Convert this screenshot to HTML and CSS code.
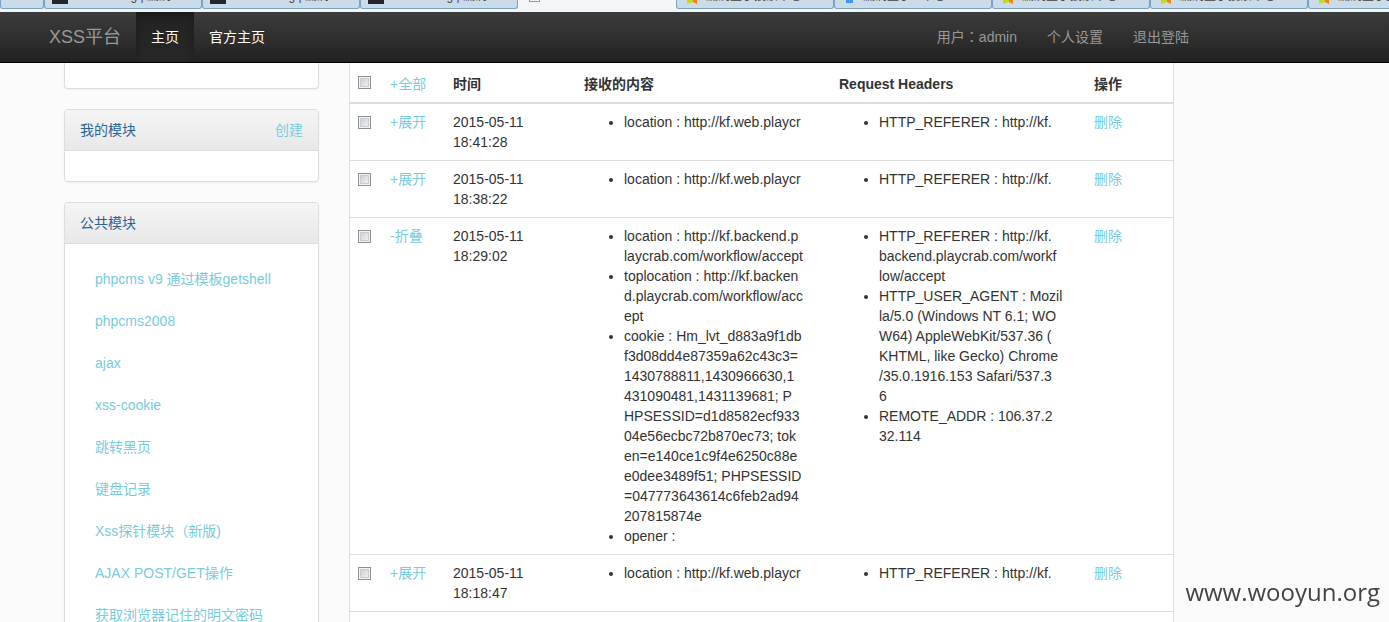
FILE: index.html
```
<!DOCTYPE html>
<html lang="zh-CN">
<head>
<meta charset="utf-8">
<title>XSS平台</title>
<link rel="stylesheet" href="styles.css">
</head>
<body>
<div class="tabs">
  <div class="tab tab-first"></div>
  <div class="tab"><span class="fav fav-dark"></span><span class="tab-text tab-text-end">g | 漏洞</span></div>
  <div class="tab"><span class="fav fav-dark"></span><span class="tab-text tab-text-end">g | 漏洞</span></div>
  <div class="tab"><span class="fav fav-dark"></span><span class="tab-text tab-text-end">g | 漏洞</span></div>
  <div class="tab tab-active"><span class="fav fav-page"></span></div>
  <div class="tab"><span class="fav fav-star"></span><span class="tab-text">漏洞盒子搜索中心</span></div>
  <div class="tab"><span class="fav fav-blue"></span><span class="tab-text">漏洞盒子 - 中心</span></div>
  <div class="tab"><span class="fav fav-star"></span><span class="tab-text">漏洞盒子搜索中心</span></div>
  <div class="tab"><span class="fav fav-star"></span><span class="tab-text">漏洞盒子搜索中心</span></div>
  <div class="tab"><span class="fav fav-star"></span><span class="tab-text">漏洞盒子搜索中心</span></div>
</div>
<header class="navbar">
  <nav class="container nav-inner">
    <a class="brand" href="#">XSS平台</a>
    <a class="nav-link nav-active" href="#">主页</a>
    <a class="nav-link nav-bright" href="#">官方主页</a>
    <span class="nav-space"></span>
    <a class="nav-link" href="#">用户<span class="colon" lang="zh-TW">：</span>admin</a>
    <a class="nav-link" href="#">个人设置</a>
    <a class="nav-link" href="#">退出登陆</a>
  </nav>
</header>
<div class="container content">
  <aside class="sidebar">
    <section class="panel panel-cut"></section>
    <section class="panel">
      <h2 class="panel-head">我的模块 <a href="#">创建</a></h2>
      <div class="panel-body"></div>
    </section>
    <section class="panel">
      <h2 class="panel-head">公共模块</h2>
      <ul class="modules">
        <li><a href="#">phpcms v9 通过模板getshell</a></li>
        <li><a href="#">phpcms2008</a></li>
        <li><a href="#">ajax</a></li>
        <li><a href="#">xss-cookie</a></li>
        <li><a href="#">跳转黑页</a></li>
        <li><a href="#">键盘记录</a></li>
        <li><a href="#">Xss探针模块<span class="colon" lang="zh-TW">（</span>新版)</a></li>
        <li><a href="#">AJAX POST/GET操作</a></li>
        <li><a href="#">获取浏览器记住的明文密码</a></li>
      </ul>
    </section>
  </aside>
  <main class="main">
    <table class="records">
      <colgroup><col class="c-check"><col class="c-toggle"><col class="c-time"><col class="c-data"><col class="c-data"><col></colgroup>
      <thead>
        <tr><th><input type="checkbox" aria-label="全部"></th><th><a class="plain" href="#">+全部</a></th><th>时间</th><th>接收的内容</th><th>Request Headers</th><th>操作</th></tr>
      </thead>
      <tbody>
        <tr>
          <td><input type="checkbox" aria-label="2015-05-11 18:41:28"></td><td><a href="#">+展开</a></td><td>2015-05-11<br>18:41:28</td>
          <td><ul><li>location : http://kf.web.playcr</li></ul></td>
          <td><ul><li>HTTP_REFERER : http://kf.</li></ul></td>
          <td><a href="#">删除</a></td>
        </tr>
        <tr>
          <td><input type="checkbox" aria-label="2015-05-11 18:38:22"></td><td><a href="#">+展开</a></td><td>2015-05-11<br>18:38:22</td>
          <td><ul><li>location : http://kf.web.playcr</li></ul></td>
          <td><ul><li>HTTP_REFERER : http://kf.</li></ul></td>
          <td><a href="#">删除</a></td>
        </tr>
        <tr>
          <td><input type="checkbox" aria-label="2015-05-11 18:29:02"></td><td><a href="#">-折叠</a></td><td>2015-05-11<br>18:29:02</td>
          <td><ul>
            <li>location : http://kf.backend.p<br>laycrab.com/workflow/accept</li>
            <li>toplocation : http://kf.backen<br>d.playcrab.com/workflow/acc<br>ept</li>
            <li>cookie : Hm_lvt_d883a9f1db<br>f3d08dd4e87359a62c43c3=<br>1430788811,1430966630,1<br>431090481,1431139681; P<br>HPSESSID=d1d8582ecf933<br>04e56ecbc72b870ec73; tok<br>en=e140ce1c9f4e6250c88e<br>e0dee3489f51; PHPSESSID<br>=047773643614c6feb2ad94<br>207815874e</li>
            <li>opener :</li>
          </ul></td>
          <td><ul>
            <li>HTTP_REFERER : http://kf.<br>backend.playcrab.com/workf<br>low/accept</li>
            <li>HTTP_USER_AGENT : Mozil<br>la/5.0 (Windows NT 6.1; WO<br>W64) AppleWebKit/537.36 (<br>KHTML, like Gecko) Chrome<br>/35.0.1916.153 Safari/537.3<br>6</li>
            <li>REMOTE_ADDR : 106.37.2<br>32.114</li>
          </ul></td>
          <td><a href="#">删除</a></td>
        </tr>
        <tr>
          <td><input type="checkbox" aria-label="2015-05-11 18:18:47"></td><td><a href="#">+展开</a></td><td>2015-05-11<br>18:18:47</td>
          <td><ul><li>location : http://kf.web.playcr</li></ul></td>
          <td><ul><li>HTTP_REFERER : http://kf.</li></ul></td>
          <td><a href="#">删除</a></td>
        </tr>
      </tbody>
    </table>
  </main>
</div>
<div class="watermark">www.wooyun.org</div>
</body>
</html>
```
FILE: styles.css
```
* { box-sizing: border-box; }

body {
  display: flex;
  flex-direction: column;
  height: 100vh;
  margin: 0;
  overflow: hidden;
  background: #fbfbfb;
  color: #333;
  font: 14px/20px "Liberation Sans", "Noto Sans CJK SC", sans-serif;
}

a { color: #77cce0; text-decoration: none; }
ul { margin: 0; }

/* Browser tab strip */
.tabs {
  display: flex;
  flex: none;
  height: 12px;
  padding-bottom: 3px;
  overflow: hidden;
  background: #f1f5fa;
}
.tab {
  display: flex;
  flex: none;
  gap: 6px;
  width: 158px;
  height: 9px;
  padding-left: 7px;
  overflow: hidden;
  background: #cbdbe8;
  border: solid #7ba2c2;
  border-width: 0 1px 1px;
  border-radius: 0 0 3px 3px;
}
.tab-first { width: 44px; }
.tab-active { background: #f4f6fa; border-color: transparent; padding-left: 10px; }
.tab-text {
  margin-top: -14px;
  color: #444;
  font-size: 12px;
  line-height: 20px;
  white-space: nowrap;
}
.tab-text-end { margin-left: auto; padding-right: 30px; }
.fav { flex: none; width: 16px; height: 4px; }
.fav-dark { background: #25262b; }
.fav-page { width: 11px; height: 2px; border: solid #999; border-width: 0 1px 1px; }
.fav-blue { width: 7px; height: 3px; margin: 0 4px; background: #4193f7; }
.fav-star { width: 10px; margin: 0 3px; background: linear-gradient(90deg, #c0dc20 65%, #ff8010 65%); clip-path: polygon(0 0, 100% 0, 100% 100%, 60% 50%, 0 100%); }

/* Navigation */
.navbar {
  flex: none;
  background: linear-gradient(#3c3c3c, #222);
  border-bottom: 1px solid #000;
}
.container { max-width: 1170px; width: 100%; margin-left: 34px; }
.nav-inner { display: flex; height: 50px; }
.brand { padding: 15px; color: #999; font-size: 18px; }
.nav-link { padding: 15px; color: #999; }
.nav-bright { color: #fff; }
.nav-active { color: #fff; background: linear-gradient(#222, #282828); box-shadow: inset 0 3px 9px rgba(0, 0, 0, .25); }
.nav-space { flex: 1; }
.colon { font-family: "Noto Sans CJK TC", sans-serif; line-height: 1px; }

/* Page columns */
.content {
  display: flex;
  flex: 1;
  gap: 30px;
  min-height: 0;
  padding: 0 30px;
}
.sidebar { flex: none; width: 255px; }

.panel {
  margin-bottom: 20px;
  background: #fff;
  border: 1px solid #ddd;
  border-radius: 4px;
  box-shadow: 0 1px 2px rgba(0, 0, 0, .05);
}
.panel-cut { height: 26px; border-top: 0; border-radius: 0 0 4px 4px; }
.panel-head {
  display: flex;
  justify-content: space-between;
  margin: 0;
  padding: 10px 15px;
  color: #2a6496;
  font-size: 14px;
  font-weight: normal;
  background: linear-gradient(#f5f5f5, #e8e8e8);
  border-bottom: 1px solid #ddd;
  border-radius: 3px 3px 0 0;
}
.panel-body { padding: 15px; }
.modules { padding: 14px 15px; list-style: none; }
.modules li { padding: 11px 15px; white-space: nowrap; }

/* Records */
.main {
  flex: 1;
  min-width: 0;
  padding-top: 3px;
  background: #fff;
  border: solid #ddd;
  border-width: 0 1px;
}
.records { width: 100%; table-layout: fixed; border-spacing: 0; }
.c-check { width: 32px; }
.c-toggle { width: 63px; }
.c-time { width: 131px; }
.c-data { width: 255px; }
.records th, .records td {
  padding: 8px;
  text-align: left;
  vertical-align: top;
  border-bottom: 1px solid #ddd;
}
.records th { border-bottom-width: 2px; white-space: nowrap; }
.records ul { padding-left: 40px; }
.records li { white-space: nowrap; }
.plain { font-weight: normal; }
.records input {
  display: block;
  appearance: none;
  width: 13px;
  height: 13px;
  margin: 4px 0 0;
  background: linear-gradient(135deg, #c4c9d2, #f6f6f6);
  border: 1px solid #8e8f8f;
  box-shadow: inset 0 0 0 1px #f4f4f4, inset 0 0 0 2px #c8cbd0;
}
.records th input { margin-top: 2px; }

.watermark {
  position: fixed;
  right: 9px;
  bottom: 15px;
  color: #444;
  font: 24px/30px "Open Sans", "Noto Sans", sans-serif;
}
```
